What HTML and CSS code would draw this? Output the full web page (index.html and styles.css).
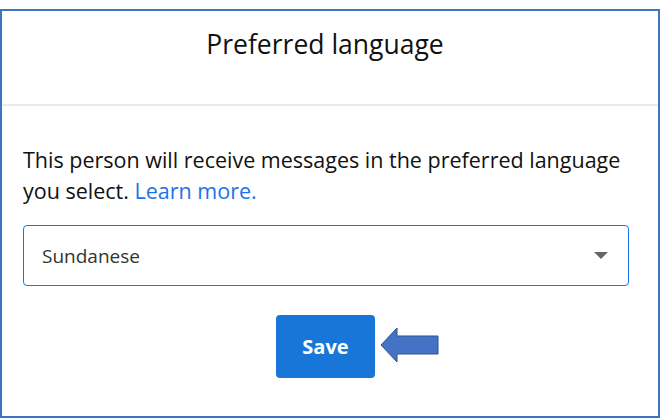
FILE: index.html
```html
<!DOCTYPE html>
<html>
<head>
<meta charset="utf-8">
<link rel="stylesheet" href="styles.css">
</head>
<body>
<div class="frame">
  <div class="header">Preferred language</div>
  <div class="content">
    <p class="desc">This person will receive messages in the preferred language you select. <a class="link">Learn more.</a></p>
    <div class="select">
      <span>Sundanese</span>
      <span class="caret"></span>
    </div>
    <div class="actions">
      <button class="save">Save</button>
      <svg class="arrow" width="62" height="36" viewBox="0 0 62 36">
        <polygon points="2,18 18,1 18,9 59,9 59,27 18,27 18,35" fill="#4472c4" stroke="#2f528f" stroke-width="1"/>
      </svg>
    </div>
  </div>
</div>
</body>
</html>
```
FILE: styles.css
```css
* { box-sizing: border-box; }
html, body { margin: 0; padding: 0; background: #fff; }
body { font-family: "Open Sans", "Noto Sans", sans-serif; color: #111; }
.frame {
  margin-top: 9px;
  width: 660px;
  height: 409px;
  border: 2px solid #3f75bf;
}
.header {
  height: 95px;
  border-bottom: 2px solid #ebebef;
  text-align: center;
  font-size: 26.5px;
  line-height: 36px;
  padding: 15px 10px 0 0;
  color: #111;
}
.content { padding: 0 29px 0 21px; }
.desc {
  margin: 38px 0 0 0;
  font-size: 21.5px;
  line-height: 31px;
  color: #111;
}
.link { color: #1a73e8; text-decoration: none; }
.select {
  margin-top: 19px;
  height: 61px;
  border: 1.5px solid #1a73e8;
  border-radius: 4px;
  display: flex;
  align-items: center;
  justify-content: space-between;
  padding: 0 20px 0 18px;
  font-size: 19px;
  color: #333;
}
.caret {
  width: 0; height: 0;
  border-left: 7px solid transparent;
  border-right: 7px solid transparent;
  border-top: 7px solid #666;
}
.actions {
  position: relative;
  display: flex;
  justify-content: center;
  margin-top: 29px;
  padding-right: 1px;
}
.save {
  width: 99px;
  height: 63px;
  background: #1976d9;
  color: #fff;
  border: none;
  border-radius: 4px;
  font-family: "Open Sans", "Noto Sans", sans-serif;
  font-weight: 700;
  font-size: 20px;
}
.arrow {
  position: absolute;
  left: 356px;
  top: 12px;
}
```
